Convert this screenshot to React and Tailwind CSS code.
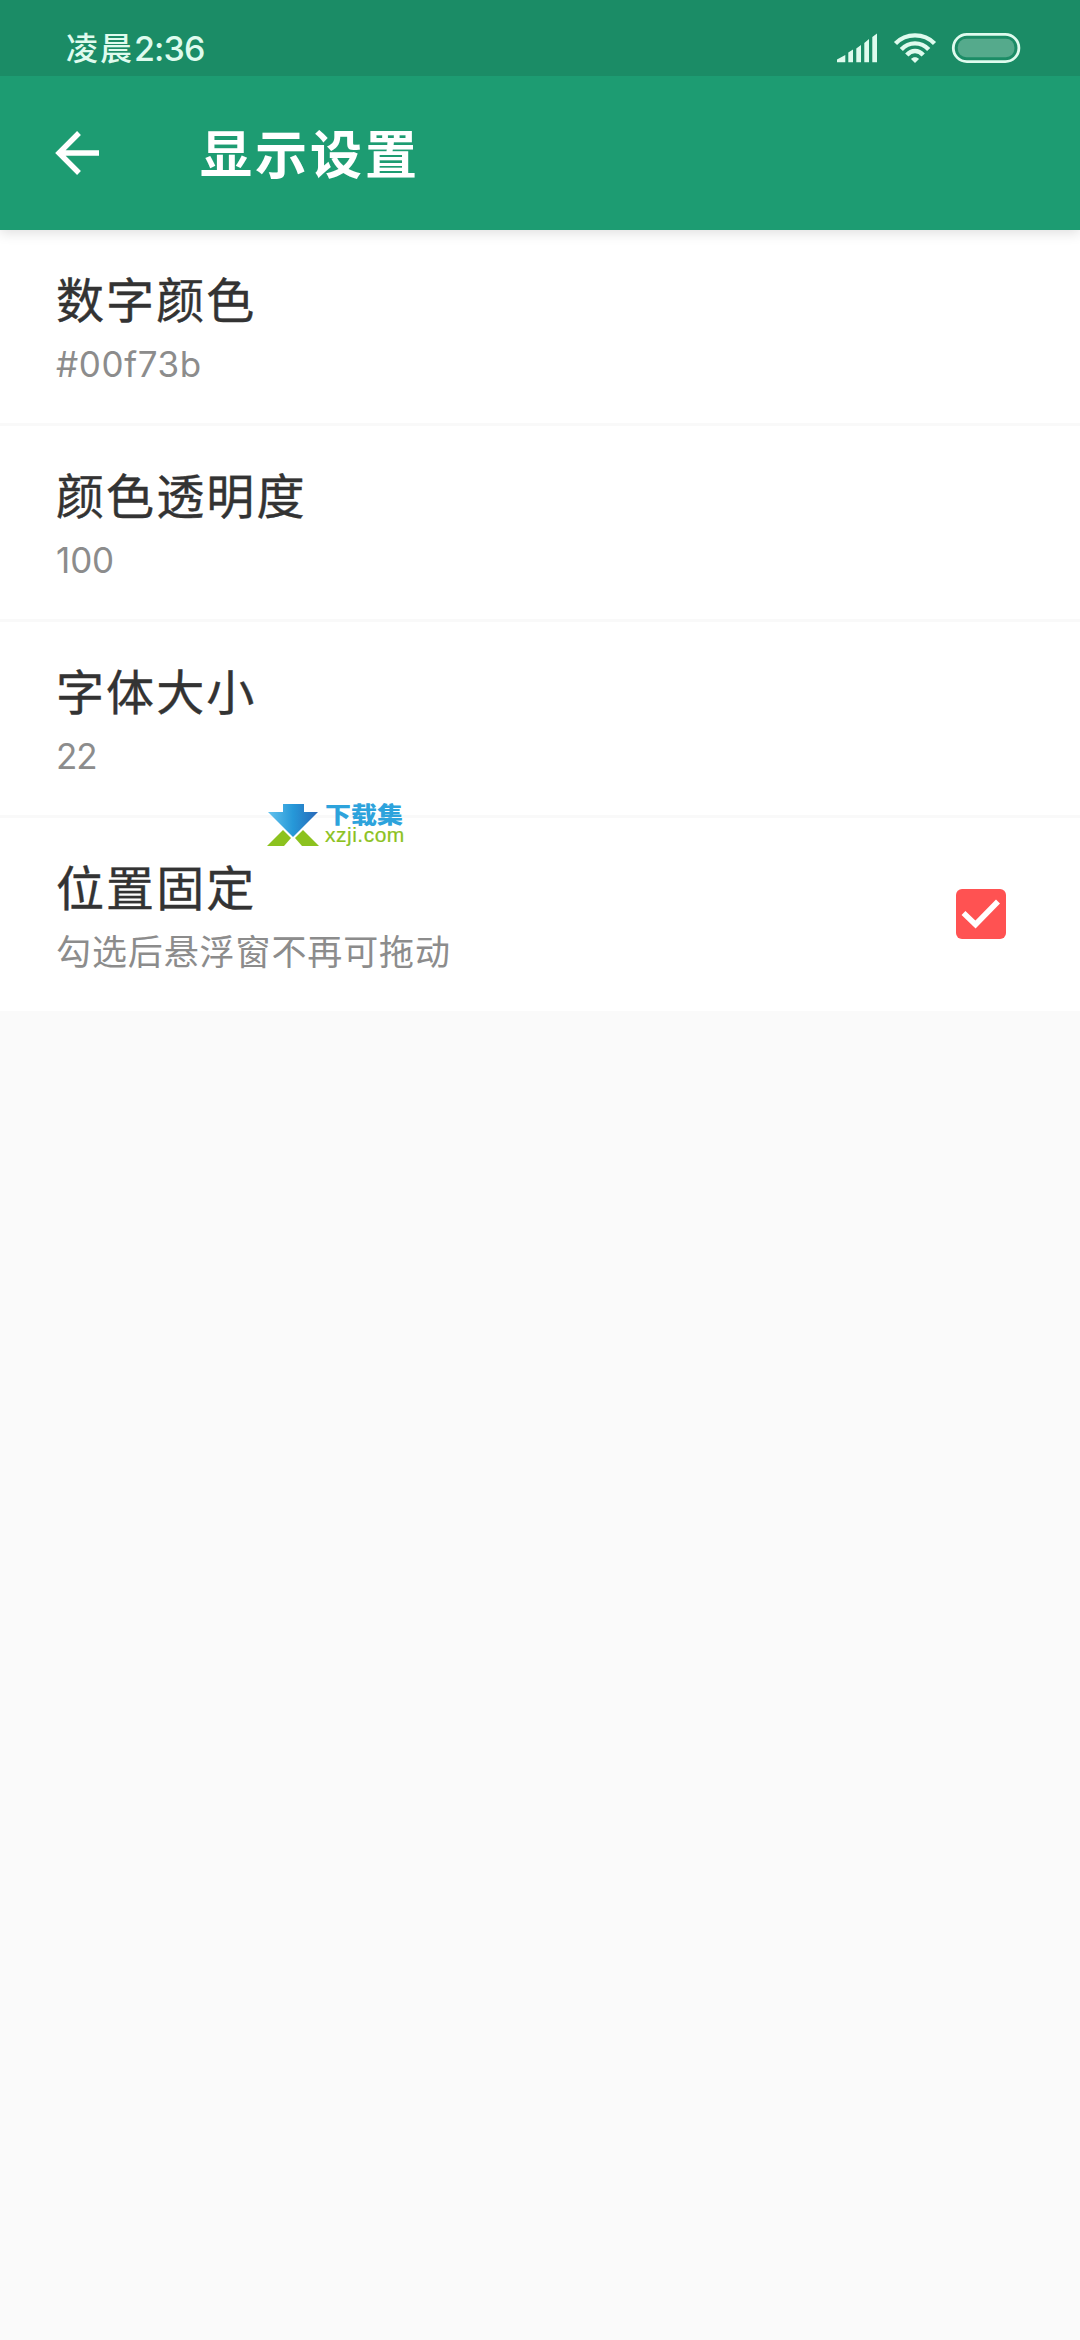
const rows = [
  { title: '数字颜色', value: '#00f73b', spacing: 'tracking-[0.6px]' },
  { title: '颜色透明度', value: '100', spacing: 'tracking-[-0.1px]' },
  { title: '字体大小', value: '22', spacing: 'tracking-[-1.2px]' },
  { title: '位置固定', value: '勾选后悬浮窗不再可拖动', spacing: 'tracking-[0.9px]', checked: true },
];

function StatusBar() {
  return (
    <div className="relative z-20 flex h-[76px] shrink-0 items-center justify-between bg-[#1b8c66] pl-[66px] pr-[59px] text-[#dffbee]">
      <div className="flex items-center pt-[21px] font-medium leading-[40px]">
        <span className="text-[32px] tracking-[2px]">凌晨</span>
        <span className="text-[34px] tracking-[-0.9px]">2:36</span>
      </div>
      <div className="flex items-center pt-5">
        <svg width="41" height="30" viewBox="0 0 41 30" fill="currentColor">
          <path d="M0 29.3V26.5L8.3 22v7.3zM11.3 19.5l4.7-3v12.8h-4.7zM19.3 15.5l4.7-3.5v17.3h-4.7zM27.3 10l4.7-4v23.3h-4.7zM35.3 4L40 .5v28.8h-4.7z" />
        </svg>
        <svg className="ml-[15px]" width="44" height="30" viewBox="0 0 44 30" fill="none" stroke="currentColor" strokeWidth="4.4">
          <path d="M2.5 10.5C13-.3 31-.3 41.5 10.5M8.3 16.5C16 8.3 28 8.3 35.7 16.5M13.8 22C18.5 16.7 25.5 16.7 30.2 22" />
          <path d="M22 30l-4-4c2-2.4 6-2.4 8 0z" fill="currentColor" stroke="none" />
        </svg>
        <svg className="ml-[14px]" width="70" height="30" viewBox="0 0 70 30" fill="none">
          <rect x="2.3" y="1.4" width="65.6" height="27.2" rx="13.6" stroke="currentColor" strokeWidth="2.8" />
          <rect x="6.8" y="5.8" width="56.6" height="18.4" rx="8.5" fill="#55aa8c" />
        </svg>
      </div>
    </div>
  );
}

function AppBar() {
  return (
    <header className="z-10 flex h-[154px] shrink-0 items-center bg-[#1d9c72] pl-[55px] text-white shadow-[0_3px_12px_rgba(0,0,0,0.13)]">
      <svg width="45" height="44" viewBox="0 0 45 44" fill="none" stroke="currentColor" strokeWidth="5.4">
        <path d="M44 22H5M24 2L4 22l20 20" />
      </svg>
      <h1 className="ml-[100px] pt-1.5 text-[52px] font-bold leading-[70px] tracking-[3px]">显示设置</h1>
    </header>
  );
}

function Row({ title, value, spacing, checked }) {
  return (
    <li className="flex h-[196px] items-start justify-between border-b-[3px] border-[#f9f9f9] bg-white pl-[56px] pr-[74px] last:h-[193px] last:border-b-0">
      <div className="pt-9">
        <div className="text-[48px] leading-[70px] tracking-[2.1px] text-[#333] [-webkit-text-stroke:0.4px_#333]">{title}</div>
        <div className={`text-[35px] leading-[57px] text-[#8c8c8c] ${spacing}`}>{value}</div>
      </div>
      {checked && (
        <svg className="mt-[71px]" width="50" height="50" viewBox="0 0 50 50" fill="none">
          <rect width="50" height="50" rx="6" fill="#ff5252" />
          <path d="M7.5 24l12 11.5 22.5-23" stroke="white" strokeWidth="5.6" />
        </svg>
      )}
    </li>
  );
}

function Watermark() {
  return (
    <div className="absolute left-[266px] top-[803px] z-20 flex items-start">
      <svg width="54" height="43" viewBox="0 0 54 43">
        <defs>
          <linearGradient id="arrow" x1="0" y1="0" x2="1" y2="0">
            <stop offset="0" stopColor="#64c3ee" />
            <stop offset="0.5" stopColor="#2698d8" />
            <stop offset="1" stopColor="#2868b8" />
          </linearGradient>
        </defs>
        <path d="M17 1h21v8h14L27 34 2 9h15z" fill="url(#arrow)" />
        <path d="M1 43l16-16 8 8-7 8zM53 43L37 27l-8 8 7 8z" fill="#8cc21f" />
      </svg>
      <div className="ml-[5px]">
        <div className="h-[24px] origin-top-left scale-y-[0.86] pt-[2px] text-[26px] font-black leading-[24px] text-[#2da3dc]">下载集</div>
        <div className="h-[20px] font-['Liberation_Sans'] text-[21px] leading-[16px] tracking-[0.5px] text-[#8cc21f] [-webkit-text-stroke:0.2px_#8cc21f]">xzji.com</div>
      </div>
    </div>
  );
}

export default function App() {
  return (
    <div className="relative flex h-[2340px] w-[1080px] flex-col overflow-hidden bg-[#fafafa] font-[Inter,'Noto_Sans_CJK_SC',sans-serif]">
      <StatusBar />
      <AppBar />
      <ul className="flex flex-col">
        {rows.map((row) => (
          <Row key={row.title} {...row} />
        ))}
      </ul>
      <Watermark />
    </div>
  );
}
